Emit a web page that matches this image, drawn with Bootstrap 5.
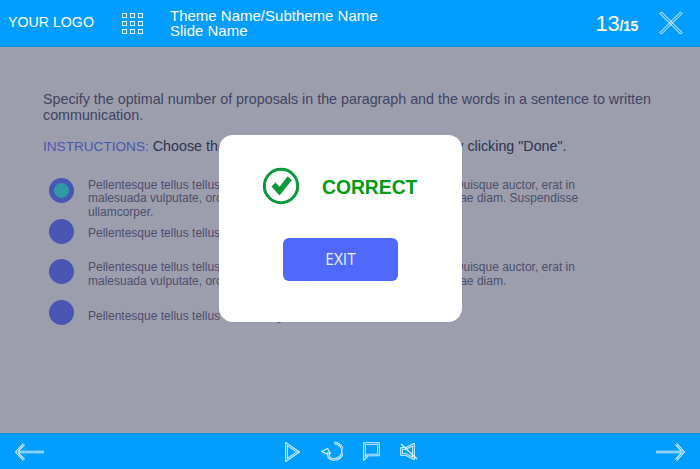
<!DOCTYPE html>
<html lang="en">
<head>
    <meta charset="UTF-8">
    <meta name="viewport" content="width=device-width, initial-scale=1">
    <title>Slide Name</title>
    <link href="https://cdn.jsdelivr.net/npm/bootstrap@5.3.0/dist/css/bootstrap.min.css" rel="stylesheet">
    <style>
        html, body { height: 469px; overflow: hidden; }
        body { font-family: "Liberation Sans", Arial, sans-serif; background: #9c9eae; color: #41445f; position: relative; }
        .top-bar { height: 47px; background: #019dff; border-bottom: 1px solid #0a8fdf; color: #fff; padding-left: 8px; }
        .logo-text { width: 113px; font-size: 14.2px; }
        .grid-ico { width: 23px; height: 23px; margin-right: 26px; }
        .theme-text { font-size: 15px; line-height: 15px; width: 400px; }
        .page-count { font-size: 22px; margin-left: auto; margin-right: 20px; letter-spacing: -.3px; }
        .page-count span { font-size: 14px; font-weight: bold; }
        .close-ico { width: 26px; height: 26px; margin-right: 16px; }
        .slide-body { height: 386px; padding: 44px 40px 0 43px; }
        .question { font-size: 14.3px; line-height: 16px; margin-bottom: 15px; }
        .instr { font-size: 14.3px; line-height: 17px; color: #2f3350; margin-bottom: 18px; }
        .instr span { color: #4a56b0; font-size: 13.6px; }
        .option { height: 40.7px; font-size: 12px; line-height: 13.3px; color: #4c4f6b; }
        .opt-dot { width: 25px; height: 25px; border-radius: 50%; background: #4956b4; flex: none; margin: 5px 14px 0 6px; display: flex; align-items: center; justify-content: center; }
        .opt-dot i { width: 15px; height: 15px; border-radius: 50%; background: #2e9aa6; display: block; }
        .opt-text { width: 520px; padding-top: 6px; }
        .opt-mid { padding-top: 13px; }
        .opt-two { padding-top: 7px; }
        .opt-low { padding-top: 15px; }
        .bottom-bar { height: 36px; background: #019dff; border-top: 1px solid #0a8fdf; padding: 0 15px; }
        .bottom-bar svg { display: block; }
        .mid-icons { margin-left: 2px; }
        .ln-a { fill: none; stroke: #e4f5ff; stroke-width: 2.6; }
        .ln-b { fill: none; stroke: #34aeff; stroke-width: 1; }
        .result-box { position: absolute; left: 219px; top: 135px; width: 243px; height: 187px; background: #fff; border-radius: 14px; }
        .result-row { padding: 32px 0 0 43px; height: 103px; }
        .result-word { font-size: 19.3px; font-weight: bold; color: #029a12; margin: 7px 0 0 22px; }
        .exit-btn { display: block; width: 115px; height: 43px; margin-left: 64px; background: #5068fb; border: 0; border-radius: 6px; color: #eef0ff; font-family: "Open Sans", sans-serif; font-size: 15.5px; padding: 0; }
    </style>
</head>
<body>
    <div class="top-bar d-flex align-items-center">
        <div class="logo-text">YOUR LOGO</div>
        <svg class="grid-ico" viewBox="0 0 23 23" fill="none" stroke="#dff3ff" stroke-width="1">
            <rect x="1.5" y="1.5" width="4" height="4"/><rect x="9.5" y="1.5" width="4" height="4"/><rect x="17.5" y="1.5" width="4" height="4"/>
            <rect x="1.5" y="9.5" width="4" height="4"/><rect x="9.5" y="9.5" width="4" height="4"/><rect x="17.5" y="9.5" width="4" height="4"/>
            <rect x="1.5" y="17.5" width="4" height="4"/><rect x="9.5" y="17.5" width="4" height="4"/><rect x="17.5" y="17.5" width="4" height="4"/>
        </svg>
        <div class="theme-text">Theme Name/Subtheme Name<br>Slide Name</div>
        <div class="page-count">13<span>/15</span></div>
        <svg class="close-ico" viewBox="0 0 26 26" fill="none" stroke="#fff" stroke-width="1">
            <path d="M2 3.5 3.5 2 24 22.5 22.5 24Z"/><path d="M24 3.5 22.5 2 2 22.5 3.5 24Z"/>
        </svg>
    </div>

    <div class="slide-body">
        <p class="question">Specify the optimal number of proposals in the paragraph and the words in a sentence to written communication.</p>
        <p class="instr"><span>INSTRUCTIONS:</span> Choose the correct options for each and finish by clicking "Done".</p>
        <div class="option d-flex">
            <div class="opt-dot"><i></i></div>
            <div class="opt-text">Pellentesque tellus tellus, tempus ac nisi vitae, commodo tempor sit. Quisque auctor, erat in<br>malesuada vulputate, orci nunc tincidunt lacus, id tempus ante mi a vitae diam. Suspendisse<br>ullamcorper.</div>
        </div>
        <div class="option d-flex">
            <div class="opt-dot"><i class="d-none"></i></div>
            <div class="opt-text opt-mid">Pellentesque tellus tellus, tempus ac nisi vitae.</div>
        </div>
        <div class="option d-flex">
            <div class="opt-dot"><i class="d-none"></i></div>
            <div class="opt-text opt-two">Pellentesque tellus tellus, tempus ac nisi vitae, commodo tempor sit. Quisque auctor, erat in<br>malesuada vulputate, orci nunc tincidunt lacus, id tempus ante mi a vitae diam.</div>
        </div>
        <div class="option d-flex">
            <div class="opt-dot"><i class="d-none"></i></div>
            <div class="opt-text opt-low">Pellentesque tellus tellus sit amet eget.</div>
        </div>
    </div>

    <div class="bottom-bar d-flex align-items-center justify-content-between">
        <svg width="30" height="20" viewBox="0 0 30 20">
            <path class="ln-a" d="M9 2 1.500 10 9 18M2 10H29"/><path class="ln-b" d="M9 2 1.500 10 9 18M2 10H29"/>
        </svg>
        <div class="d-flex align-items-center mid-icons">
            <svg width="15" height="20" viewBox="0 0 15 20" style="margin-right:21px">
                <path class="ln-a" d="M1.500 2 13 10 1.500 18Z"/><path class="ln-b" d="M1.500 2 13 10 1.500 18Z"/>
            </svg>
            <svg width="22" height="21" viewBox="0 0 22 21" style="margin-right:20px">
                <path class="ln-a" d="M13 2a8.200 8.200 0 1 1-5 14.500L7 11"/><path class="ln-b" d="M13 2a8.200 8.200 0 1 1-5 14.500L7 11"/>
                <path d="M1 10.500 6.500 7.500 9.500 12.500 5.500 13Z" fill="none" stroke="#e4f5ff" stroke-width="1.200"/>
            </svg>
            <svg width="17" height="19" viewBox="0 0 17 19" style="margin-right:20px">
                <path class="ln-a" d="M1.500 1.500H15.500V13H5L1.500 16.500Z"/><path class="ln-b" d="M1.500 1.500H15.500V13H5L1.500 16.500Z"/>
            </svg>
            <svg width="18" height="17" viewBox="0 0 18 17">
                <path class="ln-a" d="M1.500 5.500H6L13.500 1.500V15.500L6 11.500H1.500Z"/><path class="ln-b" d="M1.500 5.500H6L13.500 1.500V15.500L6 11.500H1.500Z"/>
                <path d="M1 1 17 16" fill="none" stroke="#e4f5ff" stroke-width="1.200"/>
            </svg>
        </div>
        <svg width="30" height="20" viewBox="0 0 30 20">
            <path class="ln-a" d="M21 2 28.500 10 21 18M28 10H1"/><path class="ln-b" d="M21 2 28.500 10 21 18M28 10H1"/>
        </svg>
    </div>

    <div class="result-box">
        <div class="result-row d-flex align-items-start">
            <svg width="38" height="38" viewBox="0 0 38 38">
                <circle cx="19" cy="19" r="16.700" fill="none" stroke="#069a3c" stroke-width="3"/>
                <path d="M9.500 19.500 13.500 15.500l4 4.300L25.500 9.500 30 13 17.500 28.500Z" fill="#069a3c"/>
            </svg>
            <div class="result-word">CORRECT</div>
        </div>
        <button class="exit-btn">EXIT</button>
    </div>

    <script src="https://cdn.jsdelivr.net/npm/bootstrap@5.3.0/dist/js/bootstrap.bundle.min.js"></script>
</body>
</html>
